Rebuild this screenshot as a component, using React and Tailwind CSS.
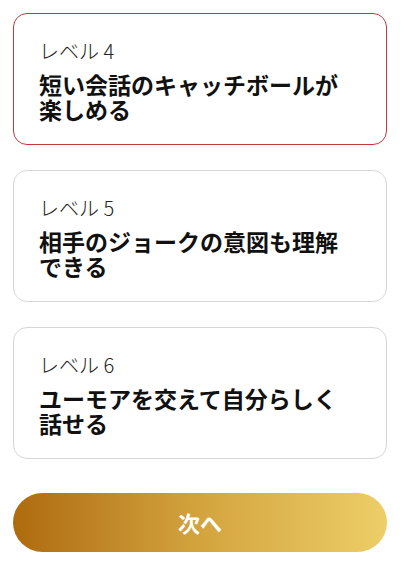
const levels = [
  { n: 4, title: ['短い会話のキャッチボールが', '楽しめる'], active: true },
  { n: 5, title: ['相手のジョークの意図も理解', 'できる'] },
  { n: 6, title: ['ユーモアを交えて自分らしく', '話せる'] },
];

export default function App() {
  return (
    <div
      className="min-h-screen bg-white pl-[13px] pt-[13px]"
      style={{ fontFamily: '"Noto Sans CJK JP", "Noto Sans", sans-serif' }}
    >
      <div className="flex w-[374px] flex-col gap-[25px]">
        {levels.map((lv) => (
          <div
            key={lv.n}
            className={`h-[132px] rounded-[14px] border bg-white pl-[25px] pt-[23px] ${
              lv.active ? 'border-[#c0393c]' : 'border-[#d6d6d6]'
            }`}
          >
            <div className="text-[20px] font-light leading-[27px] text-[#222]">
              レベル {lv.n}
            </div>
            <div className="mt-[8px] text-[23px] font-bold leading-[25px] text-[#111]">
              {lv.title.map((t) => (
                <div key={t}>{t}</div>
              ))}
            </div>
          </div>
        ))}
      </div>
      <button
        type="button"
        className="mt-[34px] flex h-[59px] w-[374px] items-center justify-center rounded-full bg-gradient-to-r from-[#ae6b0c] via-[#d3a43e] to-[#edce68] text-[22px] font-bold text-white"
      >
        次へ
      </button>
    </div>
  );
}
